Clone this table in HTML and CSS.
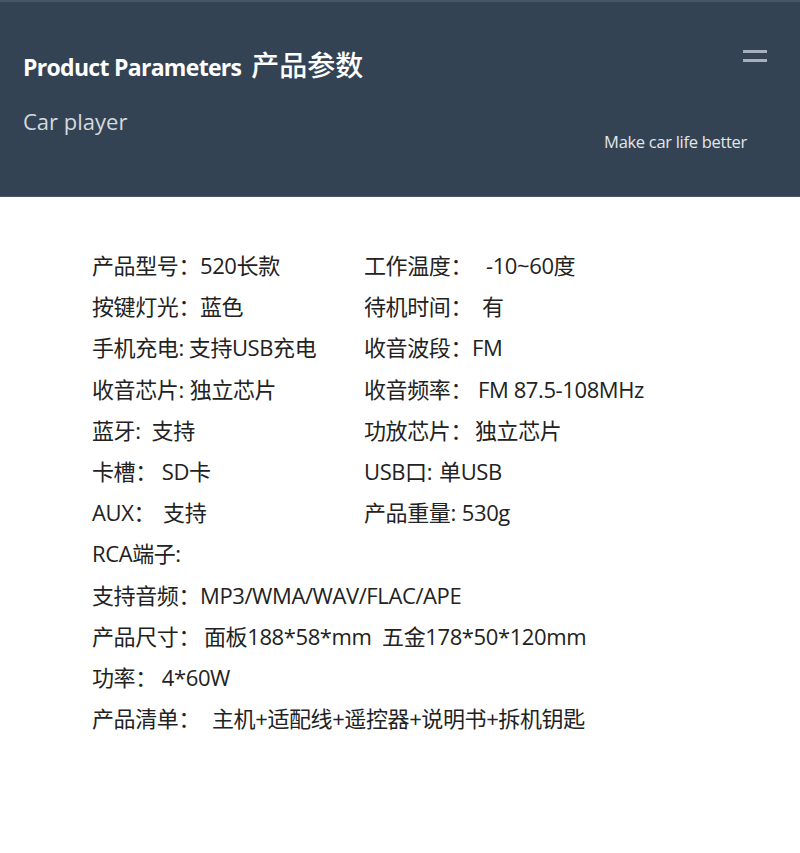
FILE: index.html
```html
<!DOCTYPE html>
<html lang="zh-CN">
<head>
<meta charset="utf-8">
<title>Product Parameters 产品参数</title>
<link rel="stylesheet" href="styles.css">
</head>
<body>
<header class="hero">
  <div class="hero-top">
    <h1 class="title"><span class="title-en">Product Parameters</span><span class="title-zh">产品参数</span></h1>
    <div class="menu" aria-label="menu"><span></span><span></span></div>
  </div>
  <div class="hero-bottom">
    <p class="subtitle">Car player</p>
    <p class="slogan">Make car life better</p>
  </div>
</header>
<main class="specs">
  <div class="grid">
    <div class="cell">产品型号：<span class="v">520长款</span></div>
    <div class="cell">工作温度：<span class="v g14">-10~60度</span></div>
    <div class="cell">按键灯光：<span class="v">蓝色</span></div>
    <div class="cell">待机时间：<span class="v g10">有</span></div>
    <div class="cell">手机充电:<span class="v g5">支持USB充电</span></div>
    <div class="cell">收音波段：<span class="v">FM</span></div>
    <div class="cell">收音芯片:<span class="v g6">独立芯片</span></div>
    <div class="cell">收音频率：<span class="v g6">FM 87.5-108MHz</span></div>
    <div class="cell">蓝牙:<span class="v g11">支持</span></div>
    <div class="cell">功放芯片：<span class="v g3">独立芯片</span></div>
    <div class="cell">卡槽：<span class="v g5">SD卡</span></div>
    <div class="cell">USB口:<span class="v g7">单USB</span></div>
    <div class="cell">AUX：<span class="v g8">支持</span></div>
    <div class="cell">产品重量:<span class="v g6">530g</span></div>
  </div>
  <div class="list">
    <div class="cell">RCA端子:</div>
    <div class="cell">支持音频：<span class="v">MP3/WMA/WAV/FLAC/APE</span></div>
    <div class="cell">产品尺寸：<span class="v g4">面板188*58*mm&nbsp; 五金178*50*120mm</span></div>
    <div class="cell">功率：<span class="v g5">4*60W</span></div>
    <div class="cell">产品清单：<span class="v g12">主机+适配线+遥控器+说明书+拆机钥匙</span></div>
  </div>
</main>
</body>
</html>
```
FILE: styles.css
```css
* { box-sizing: border-box; }
html, body { margin: 0; padding: 0; background: #ffffff; }
body {
  width: 800px;
  font-family: "Open Sans", "Noto Sans CJK SC", sans-serif;
  color: #222222;
}
.hero {
  height: 197px;
  background: #334354;
  border-top: 2px solid #46566a;
  border-bottom: 1px solid #4a5a6c;
  padding: 0 33px 0 23px;
  display: flex;
  flex-direction: column;
}
.hero-top {
  display: flex;
  justify-content: space-between;
  align-items: flex-start;
  padding-top: 43px;
}
.title {
  margin: 0;
  color: #ffffff;
  font-weight: 700;
  line-height: 38px;
  display: flex;
  align-items: baseline;
}
.title-en {
  font-family: "Open Sans", sans-serif;
  font-size: 23px;
  letter-spacing: -0.7px;
}
.title-zh {
  font-family: "Noto Sans CJK SC", sans-serif;
  font-size: 28px;
  font-weight: 500;
  margin-left: 10px;
}
.menu {
  display: flex;
  flex-direction: column;
  gap: 6px;
  width: 24px;
  margin-top: 5px;
}
.menu span {
  display: block;
  height: 3px;
  background: #a7b0ba;
}
.hero-bottom {
  display: flex;
  justify-content: space-between;
  align-items: flex-start;
}
.subtitle {
  margin: 21px 0 0 0;
  font-size: 22px;
  color: #d5d9de;
  line-height: 28px;
}
.slogan {
  margin: 46px 20px 0 0;
  font-size: 16.5px;
  color: #e3e6ea;
  letter-spacing: -0.3px;
  line-height: 20px;
}
.specs {
  padding: 48px 0 0 92px;
  font-size: 22px;
  line-height: 41.2px;
  letter-spacing: -0.4px;
}
.grid {
  display: grid;
  grid-template-columns: 272px 1fr;
}
.cell { white-space: nowrap; }
.v { display: inline-block; }
.g3 { margin-left: 3px; }
.g4 { margin-left: 4px; }
.g5 { margin-left: 5px; }
.g6 { margin-left: 6px; }
.g7 { margin-left: 7px; }
.g8 { margin-left: 8px; }
.g10 { margin-left: 10px; }
.g11 { margin-left: 11px; }
.g12 { margin-left: 12px; }
.g14 { margin-left: 14px; }
```
